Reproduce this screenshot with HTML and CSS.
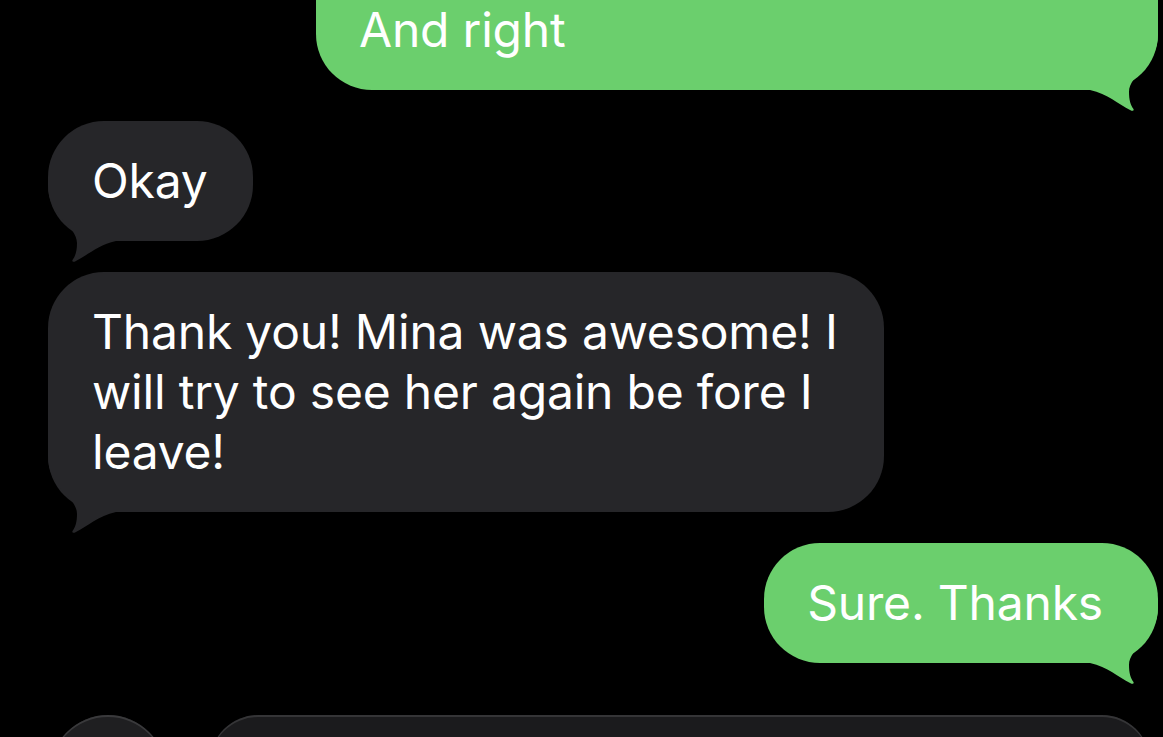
FILE: index.html
```html
<!DOCTYPE html>
<html lang="en">
<head>
<meta charset="utf-8">
<title>Messages</title>
<link rel="stylesheet" href="styles.css">
</head>
<body>
<main class="screen">
  <section class="chat">
    <div class="row sent-row">
      <div class="bubble sent cut">And right
        <svg class="tail tail-right" viewBox="0 -56 70 77" aria-hidden="true"><path d="M0,-56 C0,-24 29,-16 29,2 C29,10 27.5,15 24.5,19 C23.8,20.8 25.5,21.3 27.5,20.3 C40,14 50,4 68,0 L68,-56 Z"/></svg>
      </div>
    </div>
    <div class="row recv-row">
      <div class="bubble recv">Okay
        <svg class="tail tail-left" viewBox="0 -56 70 77" aria-hidden="true"><path d="M0,-56 C0,-24 29,-16 29,2 C29,10 27.5,15 24.5,19 C23.8,20.8 25.5,21.3 27.5,20.3 C40,14 50,4 68,0 L68,-56 Z"/></svg>
      </div>
    </div>
    <div class="row recv-row">
      <div class="bubble recv">Thank you! Mina was awesome! I<br>will try to see her again be fore I<br>leave!
        <svg class="tail tail-left" viewBox="0 -56 70 77" aria-hidden="true"><path d="M0,-56 C0,-24 29,-16 29,2 C29,10 27.5,15 24.5,19 C23.8,20.8 25.5,21.3 27.5,20.3 C40,14 50,4 68,0 L68,-56 Z"/></svg>
      </div>
    </div>
    <div class="row sent-row">
      <div class="bubble sent">Sure. Thanks
        <svg class="tail tail-right" viewBox="0 -56 70 77" aria-hidden="true"><path d="M0,-56 C0,-24 29,-16 29,2 C29,10 27.5,15 24.5,19 C23.8,20.8 25.5,21.3 27.5,20.3 C40,14 50,4 68,0 L68,-56 Z"/></svg>
      </div>
    </div>
  </section>
  <footer class="composer">
    <div class="plus"></div>
    <div class="field"></div>
  </footer>
</main>
</body>
</html>
```
FILE: styles.css
```css
html, body {
  margin: 0;
  padding: 0;
  background: #000;
}
body {
  width: 1163px;
  height: 737px;
  overflow: hidden;
  font-family: Inter, "Noto Sans", "Liberation Sans", sans-serif;
  color: #fff;
}
.screen {
  display: flex;
  flex-direction: column;
  height: 737px;
  overflow: hidden;
}
.chat {
  display: flex;
  flex-direction: column;
  gap: 31px;
  margin-top: -30px;
  padding: 0 5px 0 48px;
}
.row {
  display: flex;
}
.sent-row {
  justify-content: flex-end;
}
.recv-row {
  justify-content: flex-start;
}
.bubble {
  position: relative;
  isolation: isolate;
  box-sizing: border-box;
  border-radius: 56px;
  padding: 30px 46px 30px 44px;
  font-size: 48px;
  line-height: 60px;
  letter-spacing: -0.2px;
  white-space: nowrap;
}
.recv {
  background: #262629;
}
.recv .tail {
  fill: #262629;
}
.sent {
  background: #6bcf6d;
  padding: 30px 55px 30px 43px;
}
.sent .tail {
  fill: #6bcf6d;
}
.cut {
  width: 842px;
  border-top-left-radius: 0;
  border-top-right-radius: 0;
}
.tail {
  position: absolute;
  z-index: -1;
  bottom: -21px;
  width: 70px;
  height: 77px;
}
.tail-left {
  left: 0;
}
.tail-right {
  right: 0;
  transform: scaleX(-1);
}
.composer {
  display: flex;
  align-items: flex-start;
  gap: 44px;
  margin-top: 52px;
  padding-left: 50px;
  flex: none;
}
.plus {
  width: 116px;
  height: 116px;
  border-radius: 50%;
  background: #1f1f21;
  box-shadow: inset 0 2px 0 #3a3a3c;
  flex: none;
}
.field {
  width: 940px;
  height: 116px;
  box-sizing: border-box;
  border-radius: 48px;
  background: #1b1b1d;
  box-shadow: inset 0 2px 0 #353537;
  flex: none;
}
```
